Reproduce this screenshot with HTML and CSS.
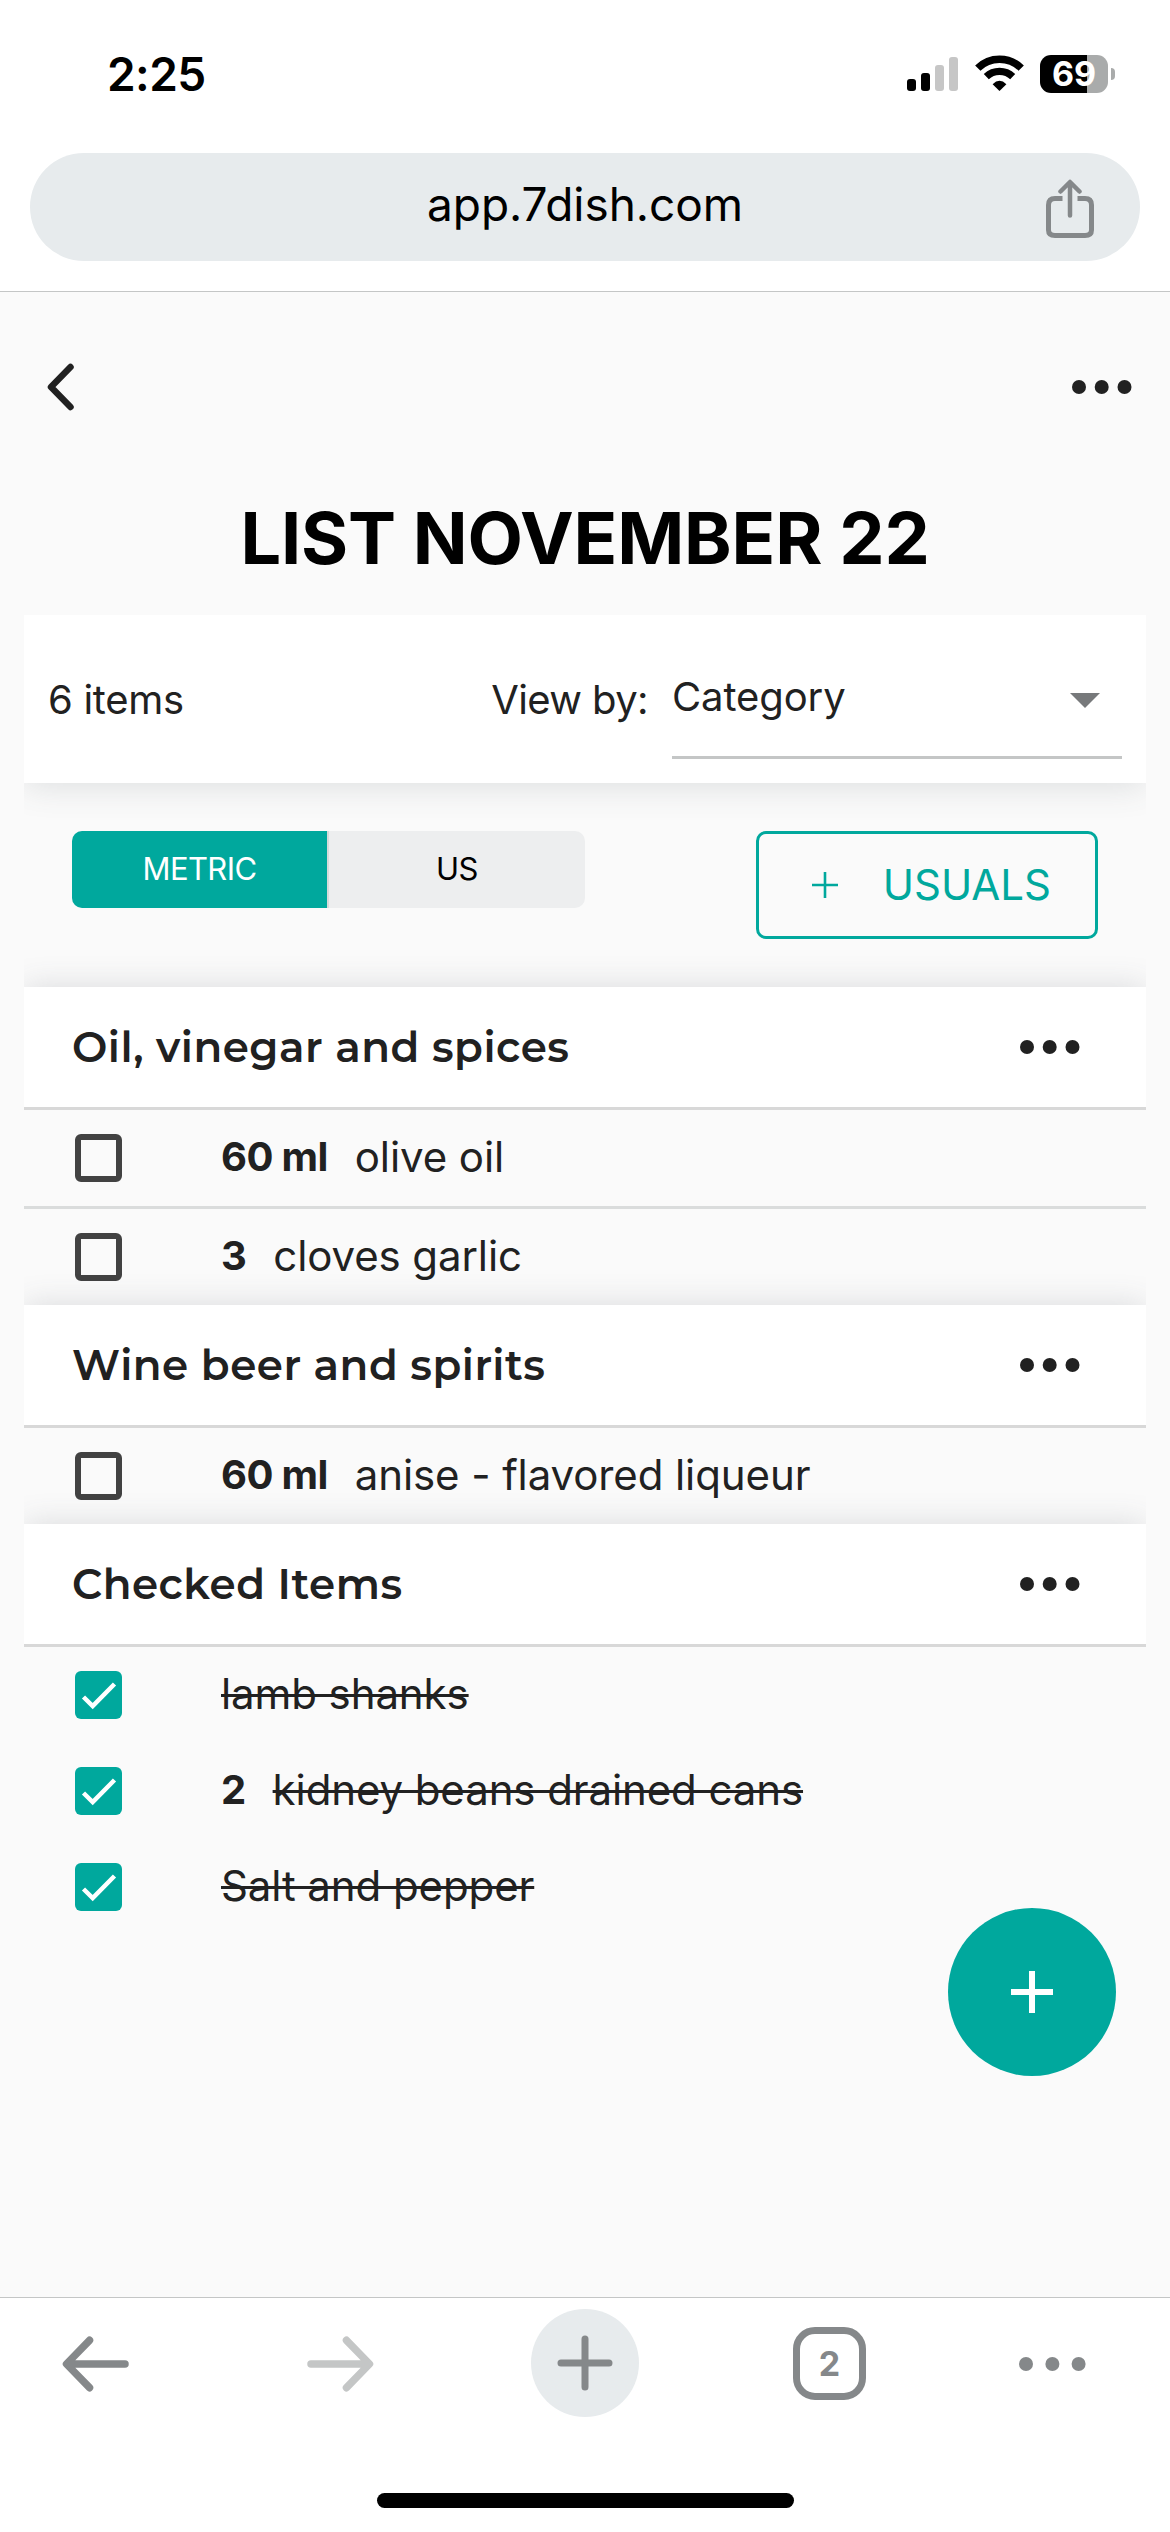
FILE: index.html
```html
<!DOCTYPE html>
<html lang="en">
<head>
<meta charset="utf-8">
<title>7dish – List November 22</title>
<link rel="stylesheet" href="styles.css">
</head>
<body>
<header class="browser-top">
  <div class="status-bar">
    <span class="clock">2:25</span>
    <div class="status-icons">
      <svg class="signal" width="51" height="34" viewBox="0 0 51 34">
        <rect x="0" y="22" width="9" height="12" rx="3"/>
        <rect x="14" y="16" width="9" height="18" rx="3"/>
        <rect class="dim" x="28" y="8" width="9" height="26" rx="3"/>
        <rect class="dim" x="42" y="0" width="9" height="34" rx="3"/>
      </svg>
      <svg class="wifi" width="49" height="36" viewBox="0 0 49 36">
        <path d="M24.5 36L17.6 29.2Q24.500 22.400 31.400 29.200Z"/>
        <path d="M2.800 13.100A31 31 0 0 1 46.200 13.100" fill="none" stroke="#000" stroke-width="7.600"/>
        <path d="M11.300 21.700A18.900 18.900 0 0 1 37.700 21.700" fill="none" stroke="#000" stroke-width="7.200"/>
      </svg>
      <div class="battery"><span class="level">69</span></div>
    </div>
  </div>
  <div class="address-bar">
    <span class="url">app.7dish.com</span>
    <svg class="share" width="48" height="60" viewBox="0 0 48 60" fill="none" stroke="#85888a" stroke-width="5">
      <path d="M16.500 19.500H9Q2.500 19.500 2.500 26V51Q2.500 56.500 9 56.500H39Q45.500 56.500 45.500 51V26Q45.500 19.500 39 19.500H31.500"/>
      <path d="M24 36.500V4M14.500 12.500L24 3L33.500 12.500" stroke-linecap="round" stroke-linejoin="round" stroke-width="4.500"/>
    </svg>
  </div>
</header>

<main class="page">
  <nav class="page-nav">
    <svg width="27" height="49" viewBox="0 0 27 49" fill="none" stroke="#212121" stroke-width="6.500" stroke-linecap="round" stroke-linejoin="round"><path d="M23.500 4L4 24L23.500 44"/></svg>
    <svg class="more" width="60" height="14" viewBox="0 0 60 14"><circle cx="7" cy="7" r="7"/><circle cx="29.700" cy="7" r="7"/><circle cx="52.500" cy="7" r="7"/></svg>
  </nav>
  <h1 class="title">LIST NOVEMBER 22</h1>

  <section class="summary">
    <span class="count">6 items</span>
    <span class="view-label">View by:</span>
    <div class="select">
      <span>Category</span>
      <svg width="30" height="15" viewBox="0 0 30 15"><path d="M0 0H30L15 15Z" fill="#77797b"/></svg>
    </div>
  </section>

  <section class="controls">
    <div class="units">
      <span class="unit active">METRIC</span>
      <span class="unit">US</span>
    </div>
    <div class="usuals">
      <svg width="26" height="26" viewBox="0 0 26 26" stroke="#00a89d" stroke-width="2.600"><path d="M13 0V26M0 13H26"/></svg>
      <span>USUALS</span>
    </div>
  </section>

  <section class="group">
    <div class="group-head"><h2>Oil, vinegar and spices</h2>
      <svg class="more" width="60" height="14" viewBox="0 0 60 14"><circle cx="7" cy="7" r="7"/><circle cx="29.700" cy="7" r="7"/><circle cx="52.500" cy="7" r="7"/></svg></div>
    <div class="item"><span class="box"></span><b>60 ml</b><span>olive oil</span></div>
    <div class="item ruled"><span class="box"></span><b>3</b><span>cloves garlic</span></div>
  </section>

  <section class="group">
    <div class="group-head"><h2>Wine beer and spirits</h2>
      <svg class="more" width="60" height="14" viewBox="0 0 60 14"><circle cx="7" cy="7" r="7"/><circle cx="29.700" cy="7" r="7"/><circle cx="52.500" cy="7" r="7"/></svg></div>
    <div class="item"><span class="box"></span><b>60 ml</b><span>anise - flavored liqueur</span></div>
  </section>

  <section class="group">
    <div class="group-head"><h2>Checked Items</h2>
      <svg class="more" width="60" height="14" viewBox="0 0 60 14"><circle cx="7" cy="7" r="7"/><circle cx="29.700" cy="7" r="7"/><circle cx="52.500" cy="7" r="7"/></svg></div>
    <div class="item done"><span class="box"><svg width="47" height="48" viewBox="0 0 47 48"><path d="M8.500 26L17.700 35L39.500 13"/></svg></span><span>lamb shanks</span></div>
    <div class="item done"><span class="box"><svg width="47" height="48" viewBox="0 0 47 48"><path d="M8.500 26L17.700 35L39.500 13"/></svg></span><b>2</b><span>kidney beans drained cans</span></div>
    <div class="item done"><span class="box"><svg width="47" height="48" viewBox="0 0 47 48"><path d="M8.500 26L17.700 35L39.500 13"/></svg></span><span>Salt and pepper</span></div>
  </section>

  <div class="fab">
    <svg width="42" height="42" viewBox="0 0 42 42" stroke="#fff" stroke-width="6"><path d="M21 0V42M0 21H42"/></svg>
  </div>
</main>

<footer class="browser-bottom">
  <div class="toolbar">
    <svg width="67" height="56" viewBox="0 0 67 56" fill="none" stroke="#85888a" stroke-width="7.500" stroke-linecap="round" stroke-linejoin="round"><path d="M63 28H5M27.500 4.300L4.500 28L27.500 51.700"/></svg>
    <svg class="forward" width="67" height="56" viewBox="0 0 67 56" fill="none" stroke="#c4c6c6" stroke-width="7.500" stroke-linecap="round" stroke-linejoin="round"><path d="M4 28H62M39.500 4.300L62.500 28L39.500 51.700"/></svg>
    <div class="new-tab">
      <svg width="56" height="56" viewBox="0 0 56 56" stroke="#85888a" stroke-width="7" stroke-linecap="round"><path d="M28 4V52M4 28H52"/></svg>
    </div>
    <div class="tabs">2</div>
    <svg class="menu" width="67" height="14" viewBox="0 0 67 14"><circle cx="7" cy="7" r="7"/><circle cx="33.400" cy="7" r="7"/><circle cx="59.600" cy="7" r="7"/></svg>
  </div>
  <div class="home-indicator"></div>
</footer>
</body>
</html>
```
FILE: styles.css
```css
* { box-sizing: border-box; }

body {
  margin: 0;
  width: 1170px;
  height: 2532px;
  display: flex;
  flex-direction: column;
  background: #fff;
  color: #212121;
  font-family: Inter, "Liberation Sans", sans-serif;
  overflow: hidden;
}

svg { display: block; flex: none; }
h1, h2 { margin: 0; }

/* Browser chrome, top */
.browser-top {
  height: 292px;
  padding: 0 30px;
  border-bottom: 1px solid #c4c6c6;
}
.status-bar {
  height: 153px;
  padding: 55px 25px 60px 77px;
  display: flex;
  justify-content: space-between;
}
.clock {
  color: #000;
  font-size: 46px;
  font-weight: 600;
  line-height: 38px;
  letter-spacing: -0.6px;
}
.status-icons { display: flex; align-items: flex-start; }
.signal { margin-top: 2px; }
.signal .dim { fill: #c6c6c6; }
.wifi { margin-left: 17px; }
.battery {
  position: relative;
  width: 68px;
  height: 38px;
  margin: 0 7px 0 16px;
  border-radius: 11px;
  background: linear-gradient(90deg, #000 47px, #a9abab 47px);
  text-align: center;
}
.battery::after {
  content: "";
  position: absolute;
  left: 71px;
  top: 13px;
  width: 4px;
  height: 12px;
  border-radius: 0 4px 4px 0;
  background: #a9abab;
}
.level {
  color: #fff;
  font-size: 34px;
  font-weight: 700;
  line-height: 38px;
}
.address-bar {
  position: relative;
  height: 108px;
  border-radius: 54px;
  background: #e7ebed;
  text-align: center;
}
.url {
  color: #000;
  font-size: 46px;
  line-height: 102px;
  letter-spacing: -0.05px;
}
.share { position: absolute; right: 46px; top: 26px; }

/* Page */
.page {
  position: relative;
  height: 2005px;
  padding: 0 24px;
  background: #fafafa;
}
.more { fill: #212121; }
.page-nav {
  height: 190px;
  padding: 0 14px 0 23px;
  display: flex;
  align-items: center;
  justify-content: space-between;
}
.title {
  height: 133px;
  padding-top: 12px;
  color: #000;
  font-size: 72px;
  font-weight: 700;
  line-height: 87px;
  letter-spacing: -0.15px;
  text-align: center;
}
.summary {
  height: 168px;
  padding: 0 24px;
  display: flex;
  align-items: center;
  background: #fff;
  box-shadow: 0 3px 32px rgba(70, 80, 90, 0.16);
  clip-path: inset(0 0 -40px 0);
  font-size: 40px;
}
.count { letter-spacing: -0.3px; }
.view-label { margin-left: auto; letter-spacing: -0.6px; }
.select {
  align-self: flex-end;
  width: 450px;
  height: 120px;
  margin: 0 0 24px 24px;
  padding: 0 22px 2px 0;
  display: flex;
  align-items: center;
  justify-content: space-between;
  border-bottom: 3px solid #c4c6c6;
  letter-spacing: -0.1px;
}
.select svg { margin-top: 7px; }
.controls {
  height: 204px;
  padding: 48px 48px 0;
  display: flex;
  justify-content: space-between;
  align-items: flex-start;
}
.units {
  width: 513px;
  height: 77px;
  display: flex;
  border-radius: 10px;
  overflow: hidden;
  background: #edeeef;
  color: #000;
  font-size: 31px;
  line-height: 76px;
  text-align: center;
  letter-spacing: -0.6px;
}
.unit { flex: 1; }
.unit.active {
  flex: 0 0 257px;
  border-right: 2px solid #d8dada;
  background: #00a89d;
  color: #fff;
}
.usuals {
  width: 342px;
  height: 108px;
  padding: 0 44px 1px 53px;
  display: flex;
  align-items: center;
  justify-content: space-between;
  border: 3px solid #00a89d;
  border-radius: 10px;
  color: #00a89d;
  font-size: 42px;
}

/* Ingredient groups */
.group-head {
  height: 123px;
  padding: 0 66px 0 48px;
  display: flex;
  align-items: center;
  justify-content: space-between;
  background: #fff;
  border-bottom: 3px solid #d8d8d8;
  box-shadow: 0 0 30px rgba(70, 80, 90, 0.18);
  clip-path: inset(-34px 0 0 0);
}
.group-head h2 {
  font-family: Montserrat, Inter, sans-serif;
  font-size: 42px;
  font-weight: 600;
  letter-spacing: 0.5px;
}
.item {
  height: 96px;
  padding: 0 48px 3px 51px;
  display: flex;
  align-items: center;
  font-size: 42px;
  letter-spacing: -0.1px;
}
.item.ruled { height: 99px; border-top: 3px solid #dadcdc; }
.item b { margin-right: 27px; font-size: 40px; letter-spacing: -0.6px; }
.box {
  width: 47px;
  height: 48px;
  margin: 3px 99px 0 0;
  border: 6px solid #424242;
  border-radius: 6px;
}
.done .box { border: 0; background: #00a89d; }
.box path { fill: none; stroke: #fff; stroke-width: 4.5px; }
.done span + span, .done b + span {
  text-decoration: line-through;
  text-decoration-thickness: 3px;
}
.fab {
  position: absolute;
  left: 948px;
  top: 1616px;
  width: 168px;
  height: 168px;
  display: grid;
  place-items: center;
  border-radius: 50%;
  background: #00a89d;
}

/* Browser chrome, bottom */
.browser-bottom {
  height: 235px;
  border-top: 1px solid #c4c6c6;
}
.toolbar {
  height: 132px;
  padding-left: 62px;
  display: flex;
  align-items: center;
}
.forward { margin-left: 178px; }
.new-tab {
  width: 108px;
  height: 108px;
  margin: -2px 0 0 157px;
  display: grid;
  place-items: center;
  border-radius: 50%;
  background: #e7ebed;
}
.tabs {
  width: 73px;
  height: 73px;
  margin: -1px 0 0 154px;
  border: 7px solid #85888a;
  border-radius: 22px;
  color: #85888a;
  font-size: 34px;
  font-weight: 700;
  line-height: 60px;
  text-align: center;
}
.menu { margin-left: 153px; fill: #85888a; }
.home-indicator {
  width: 417px;
  height: 15px;
  margin: 63px auto 0;
  border-radius: 8px;
  background: #000;
}
```
